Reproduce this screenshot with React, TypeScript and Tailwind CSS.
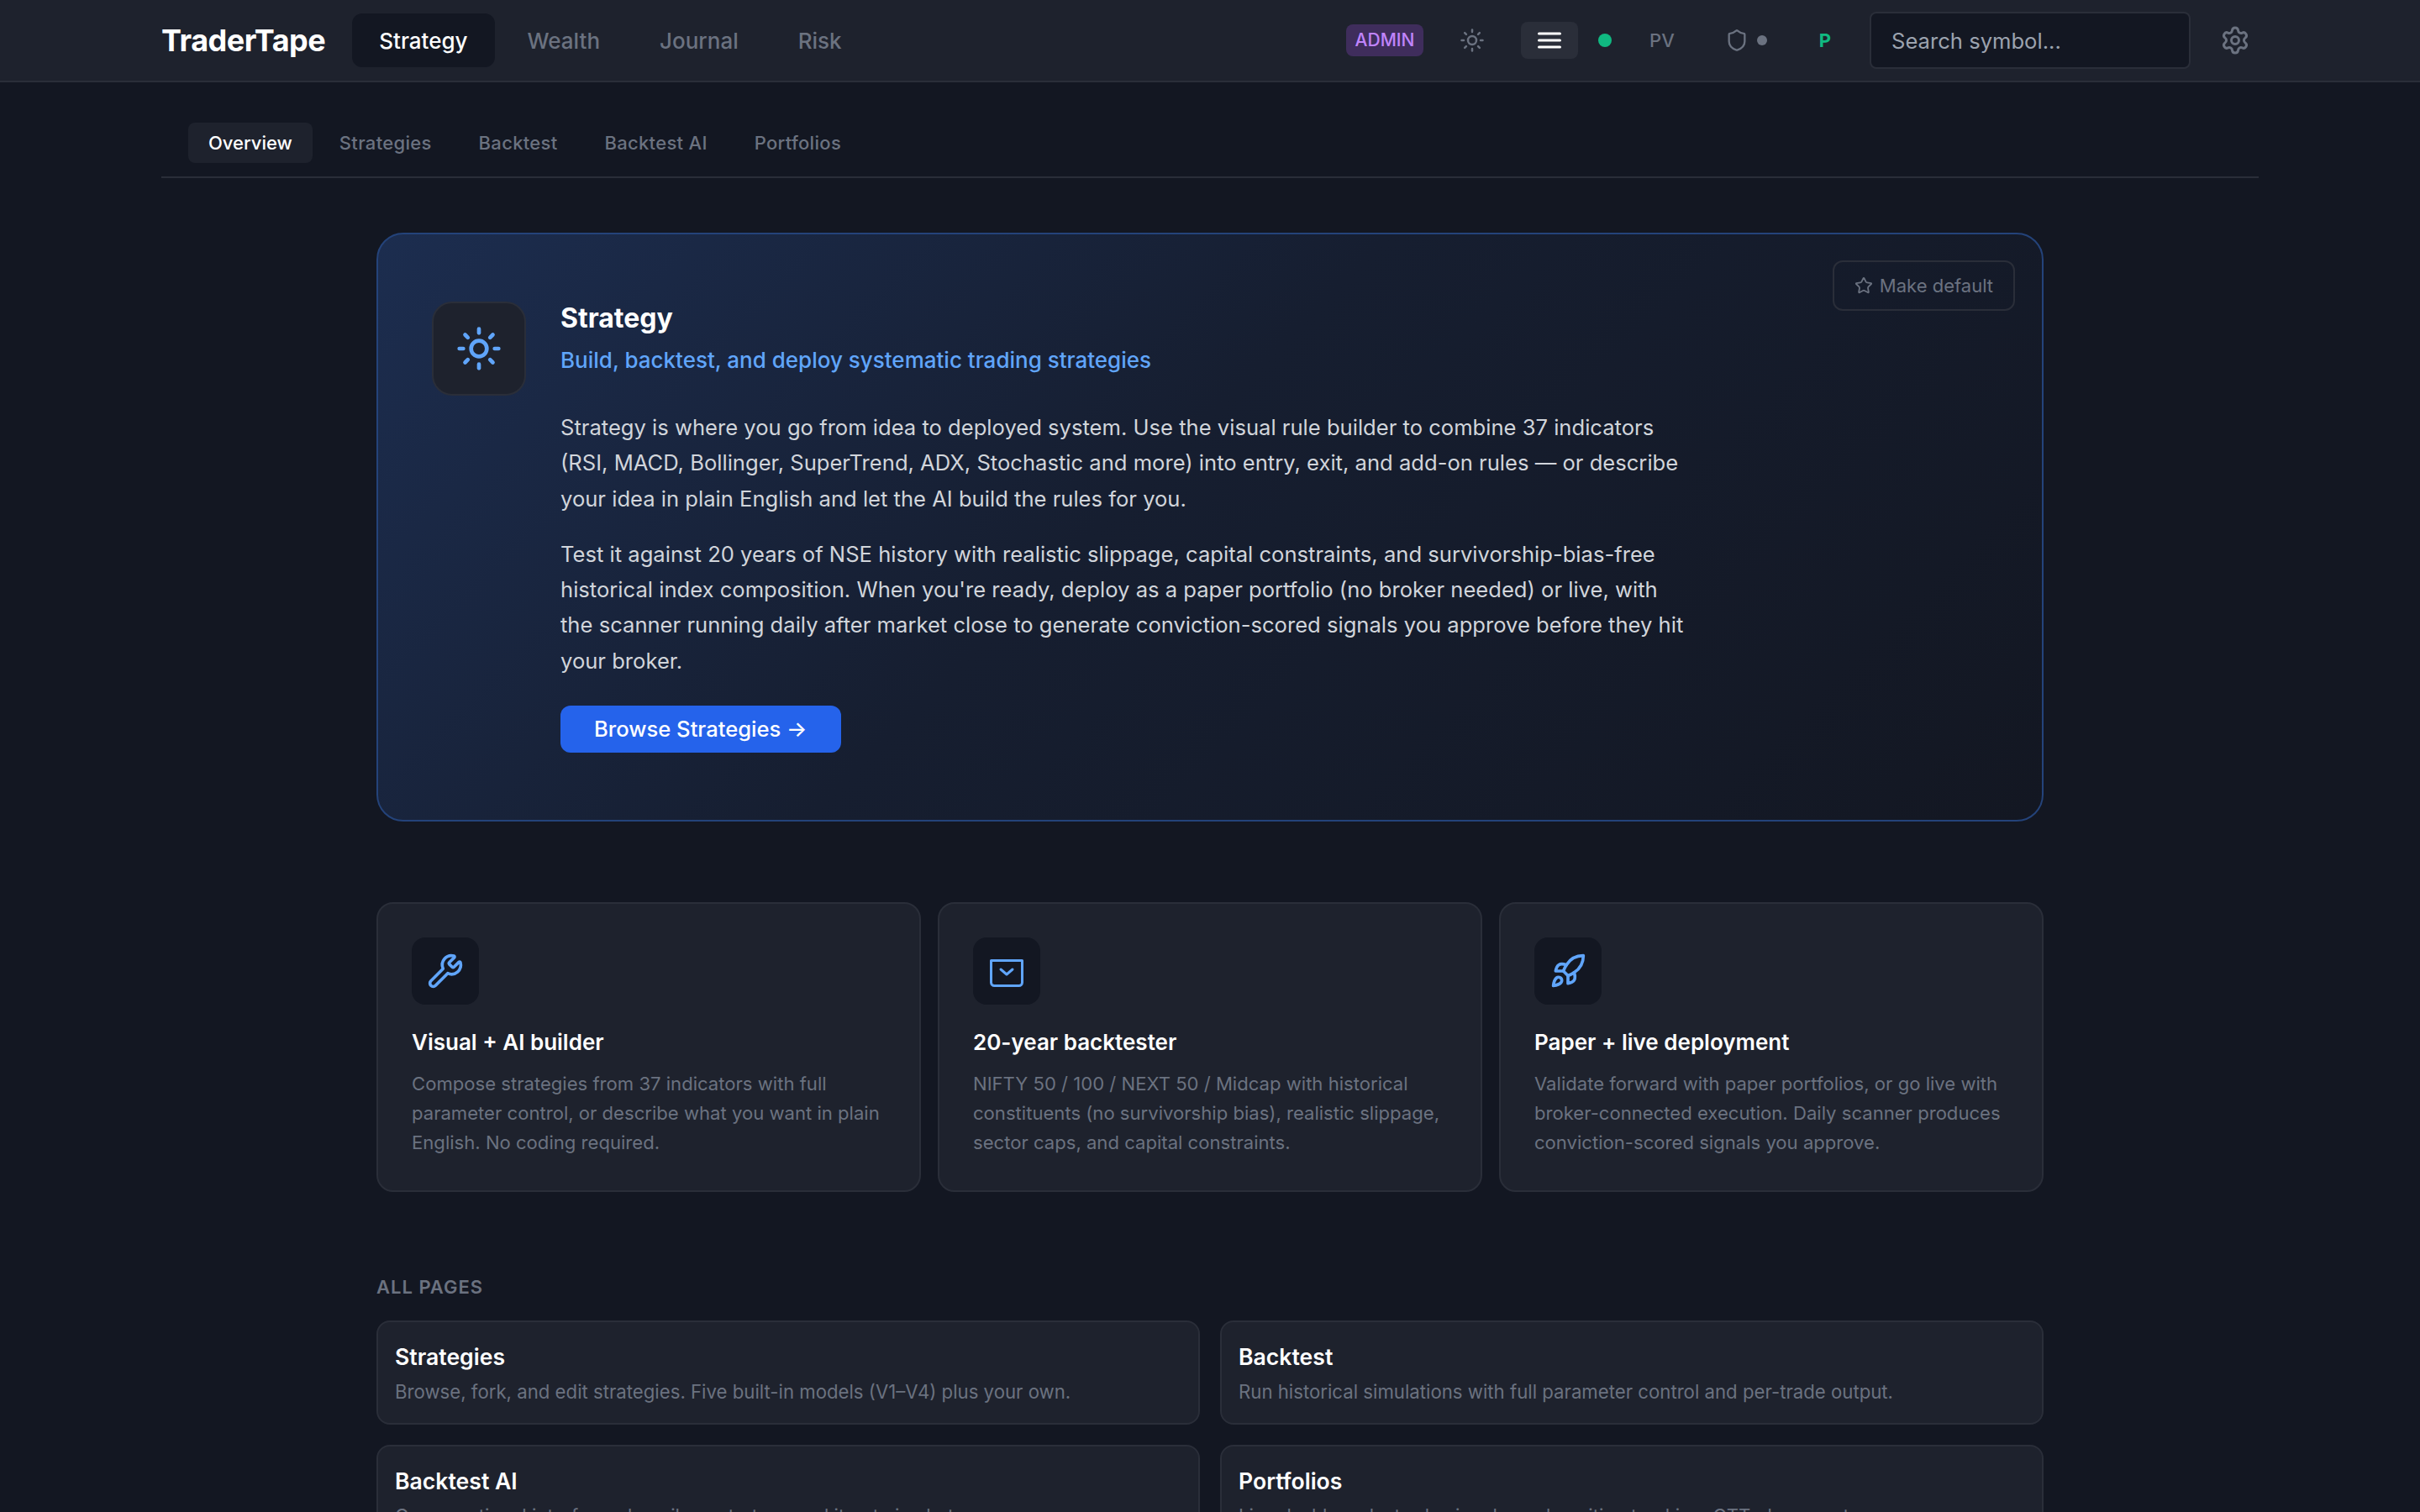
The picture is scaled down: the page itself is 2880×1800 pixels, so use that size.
import React from 'react';
import { Rocket, Settings, Shield, Star, Sun, Wrench } from 'lucide-react';

const mainTabs = ['Strategy', 'Wealth', 'Journal', 'Risk'];
const subTabs = ['Overview', 'Strategies', 'Backtest', 'Backtest AI', 'Portfolios'];

const features = [
  {
    title: 'Visual + AI builder',
    body: 'Compose strategies from 37 indicators with full parameter control, or describe what you want in plain English. No coding required.',
    icon: <Wrench size={44} strokeWidth={2} />,
  },
  {
    title: '20-year backtester',
    body: 'NIFTY 50 / 100 / NEXT 50 / Midcap with historical constituents (no survivorship bias), realistic slippage, sector caps, and capital constraints.',
    icon: (
      <svg width="40" height="40" viewBox="0 0 40 40" fill="none" stroke="currentColor" strokeWidth="3">
        <path d="M1.5 7.5H38.5V33.5a4 4 0 0 1-4 4H5.5a4 4 0 0 1-4-4Z" strokeLinejoin="round" />
        <path d="M13 18l7 6 7-6" strokeLinecap="round" strokeLinejoin="round" />
      </svg>
    ),
  },
  {
    title: 'Paper + live deployment',
    body: 'Validate forward with paper portfolios, or go live with broker-connected execution. Daily scanner produces conviction-scored signals you approve.',
    icon: <Rocket size={44} strokeWidth={2} />,
  },
];

const pages = [
  { title: 'Strategies', body: 'Browse, fork, and edit strategies. Five built-in models (V1–V4) plus your own.' },
  { title: 'Backtest', body: 'Run historical simulations with full parameter control and per-trade output.' },
  { title: 'Backtest AI', body: 'Conversational interface: describe a strategy and iterate in chat.' },
  { title: 'Portfolios', body: 'Live dashboards, trade signals, and position tracking, CTT, documents.' },
];

export default function App() {
  return (
    <div className="h-screen overflow-hidden bg-[#131722] font-['Inter',sans-serif] text-white">
      {/* Top bar */}
      <header className="h-[98px] border-b-2 border-[#2a2e39] bg-[#1e222d]">
        <div className="mx-[192px] flex h-[96px] items-center">
          <span className="mr-[32px] text-[36px] font-bold tracking-[-0.5px]">TraderTape</span>
          <nav className="flex items-center gap-[7px]">
            {mainTabs.map((t, i) => (
              <button
                key={t}
                className={`h-[64px] rounded-[12px] px-[32px] text-[26px] font-medium ${i === 0 ? 'bg-[#131722] text-white' : 'text-[#6b7280]'}`}
              >
                {t}
              </button>
            ))}
          </nav>
          <div className="ml-auto flex items-center">
            <span className="flex h-[38px] w-[92px] items-center justify-center rounded-[8px] bg-[#3f2d5c] text-[21px] font-medium text-[#c084fc]">ADMIN</span>
            <Sun size={30} strokeWidth={2} className="ml-[43px] text-[#6b7280]" />
            <button className="ml-[43px] flex h-[44px] w-[68px] items-center justify-center rounded-[8px] bg-[#2a2e39] text-white">
              <svg width="28" height="20" viewBox="0 0 28 20" stroke="currentColor" strokeWidth="3" strokeLinecap="round">
                <path d="M1.5 2h25M1.5 10h25M1.5 18h25" />
              </svg>
            </button>
            <span className="ml-[24px] h-[16px] w-[16px] rounded-full bg-[#10b981]" />
            <span className="ml-[45px] text-[22px] font-medium text-[#6b7280]">PV</span>
            <Shield size={28} strokeWidth={2} className="ml-[60px] text-[#6b7280]" />
            <span className="ml-[10px] h-[12px] w-[12px] rounded-full bg-[#6b7280]" />
            <span className="ml-[62px] text-[22px] font-bold text-[#10b981]">P</span>
            <input
              placeholder="Search symbol..."
              className="ml-[46px] h-[68px] w-[382px] rounded-[8px] border-2 border-[#2a2e39] bg-[#131722] px-[24px] text-[25.6px] text-white outline-none placeholder:text-[#9ca3af]"
            />
            <Settings size={36} strokeWidth={2} className="ml-[35px] mr-[10px] text-[#6b7280]" />
          </div>
        </div>
      </header>

      {/* Sub nav */}
      <div className="mx-[192px] flex h-[114px] items-start gap-[8px] border-b-2 border-[#2a2e39] px-[32px] pt-[48px]">
        {subTabs.map((t, i) => (
          <button
            key={t}
            className={`h-[48px] rounded-[8px] px-[24px] text-[22px] font-medium ${i === 0 ? 'bg-[#1e222d] text-white' : 'tracking-[0.3px] text-[#6b7280]'}`}
          >
            {t}
          </button>
        ))}
      </div>

      <main className="mx-auto mt-[65px] w-[1984px]">
        {/* Hero */}
        <section className="relative flex h-[701px] gap-[41px] rounded-[32px] border-2 border-[#24437a] bg-[linear-gradient(135deg,#1c2d4f_0%,#161e30_45%,#131722_100%)] px-[64px] py-[80px]">
          <button className="absolute right-[32px] top-[31px] flex h-[60px] items-center gap-[8px] rounded-[12px] border-2 border-[#2a2e39] px-[24px] text-[22px] text-[#6b7280]">
            <Star size={22} strokeWidth={2} />
            Make default
          </button>
          <div className="flex h-[112px] w-[112px] shrink-0 items-center justify-center rounded-[24px] border-2 border-[#2a2e39] bg-[#1e222d] text-[#60a5fa]">
            <Sun size={56} strokeWidth={2} />
          </div>
          <div className="w-[1344px]">
            <h1 className="text-[32px] font-bold leading-[40px]">Strategy</h1>
            <p className="mt-[10px] text-[26px] font-medium leading-[40px] text-[#60a5fa]">Build, backtest, and deploy systematic trading strategies</p>
            <p className="mt-[39px] text-[25.6px] leading-[42.25px] text-[#d1d5db]">
              Strategy is where you go from idea to deployed system. Use the visual rule builder to combine 37 indicators (RSI, MACD, Bollinger, SuperTrend, ADX, Stochastic and more) into entry, exit, and add-on rules — or describe your idea in plain English and let the AI build the rules for you.
            </p>
            <p className="mt-[24px] text-[25.6px] leading-[42.25px] text-[#d1d5db]">
              Test it against 20 years of NSE history with realistic slippage, capital constraints, and survivorship-bias-free historical index composition. When you're ready, deploy as a paper portfolio (no broker needed) or live, with the scanner running daily after market close to generate conviction-scored signals you approve before they hit your broker.
            </p>
            <button className="mt-[32px] h-[56px] rounded-[12px] bg-[#2563eb] px-[40px] text-[25.6px] font-medium text-white">Browse Strategies →</button>
          </div>
        </section>

        {/* Feature cards */}
        <section className="mt-[96px] grid grid-cols-3 gap-[20px]">
          {features.map((f) => (
            <div key={f.title} className="h-[345px] rounded-[20px] border-2 border-[#2a2e39] bg-[#1e222d] p-[40px]">
              <div className="flex h-[80px] w-[80px] items-center justify-center rounded-[16px] bg-[#131722] text-[#60a5fa]">{f.icon}</div>
              <h3 className="mt-[27px] text-[26px] font-semibold leading-[36px]">{f.title}</h3>
              <p className="mt-[14px] text-[22.1px] leading-[35px] text-[#6b7280]">{f.body}</p>
            </div>
          ))}
        </section>

        {/* All pages */}
        <h2 className="mt-[96px] text-[22px] font-semibold uppercase leading-[34px] tracking-[1px] text-[#6b7280]">All pages</h2>
        <section className="mt-[23px] grid grid-cols-2 gap-[24px]">
          {pages.map((p) => (
            <div key={p.title} className="h-[124px] rounded-[16px] border-2 border-[#2a2e39] bg-[#1e222d] px-[20px] pt-[21px]">
              <h3 className="text-[26.6px] font-semibold leading-[40px]">{p.title}</h3>
              <p className="mt-[4px] text-[22.2px] leading-[36px] text-[#6b7280]">{p.body}</p>
            </div>
          ))}
        </section>
      </main>
    </div>
  );
}
